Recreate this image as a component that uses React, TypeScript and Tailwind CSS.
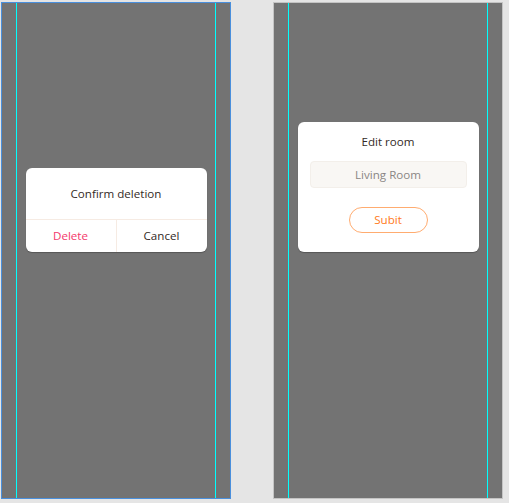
import React from "react";

function Frame({ active, children }: { active?: boolean; children: React.ReactNode }) {
  return (
    <div
      className={
        "h-[497px] bg-[#737373] border flex " +
        (active ? "w-[230px] border-[#4a8fdc]" : "w-[230px] border-[#c4c4c4]")
      }
    >
      <div className="flex-1 mx-[14px] border-x border-[#00ffff] flex flex-col">
        <div className="h-[249px] flex items-end justify-center">{children}</div>
      </div>
    </div>
  );
}

function ConfirmDialog() {
  return (
    <div className="w-[181px] bg-white rounded-[6px] text-[11.6px] shadow-[0_1px_1px_rgba(0,0,0,0.25)]">
      <div className="h-[52px] flex items-center justify-center text-[#332a26] border-b border-[#f6ebe3]">
        Confirm deletion
      </div>
      <div className="h-[32px] flex">
        <button className="flex-1 text-[#f4386b] border-r border-[#f6ebe3]">Delete</button>
        <button className="flex-1 text-[#332a26]">Cancel</button>
      </div>
    </div>
  );
}

function EditRoomDialog() {
  return (
    <div className="w-[181px] h-[130px] bg-white rounded-[6px] text-[11.6px] flex flex-col items-center pt-[12px] shadow-[0_1px_1px_rgba(0,0,0,0.25)]">
      <div className="leading-[16px] text-[#332a26]">Edit room</div>
      <div className="mt-[11px] w-[157px] h-[27px] rounded-[4px] bg-[#f9f7f4] border border-[#f3efea] flex items-center justify-center text-[#8a8684]">
        Living Room
      </div>
      <button className="mt-[19px] w-[79px] h-[26px] rounded-full border border-[#ffac70] text-[#ff7a1c]">
        Subit
      </button>
    </div>
  );
}

export default function App() {
  return (
    <div
      className="w-[509px] h-[503px] bg-[#e5e5e5] flex gap-[42px] pl-[1px] pt-[2px]"
      style={{ fontFamily: '"Open Sans", "Noto Sans", sans-serif' }}
    >
      <Frame active>
        <ConfirmDialog />
      </Frame>
      <Frame>
        <EditRoomDialog />
      </Frame>
    </div>
  );
}
